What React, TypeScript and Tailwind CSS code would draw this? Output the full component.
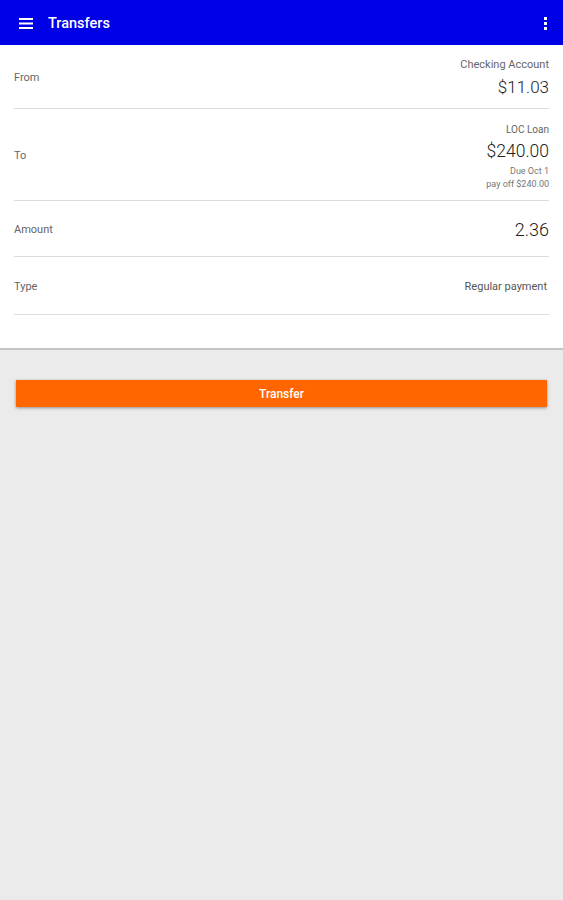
import { ReactNode } from "react";

function Row({
  label,
  children,
  className,
}: {
  label: string;
  children: ReactNode;
  className: string;
}) {
  return (
    <div
      className={`flex items-center justify-between border-b border-[#dcdcdc] ${className}`}
    >
      <span className="text-[11px] text-[#666] mt-[4px]">{label}</span>
      <div className="flex flex-col items-end text-right">{children}</div>
    </div>
  );
}

export default function App() {
  return (
    <div
      className="flex flex-col w-[563px] h-[900px] bg-[#ebebeb]"
      style={{ fontFamily: "Roboto, 'Liberation Sans', sans-serif" }}
    >
      {/* App bar */}
      <div className="flex items-center h-[45px] bg-[#0000e6] px-[19px] text-white">
        <svg width="14" height="11" viewBox="0 0 14 11" className="shrink-0 mt-[2px]">
          <rect x="0" y="0" width="14" height="2" fill="white" />
          <rect x="0" y="4.5" width="14" height="2" fill="white" />
          <rect x="0" y="9" width="14" height="2" fill="white" />
        </svg>
        <span className="ml-[15px] mt-[2px] text-[14.5px] font-medium">Transfers</span>
        <div className="ml-auto mr-[-3px] mt-[2px] flex flex-col gap-[2px]">
          <span className="w-[3px] h-[3px] bg-white" />
          <span className="w-[3px] h-[3px] bg-white" />
          <span className="w-[3px] h-[3px] bg-white" />
        </div>
      </div>

      {/* Form panel */}
      <div className="bg-white px-[14px] pb-[33px] border-b-2 border-[#c4c4c4]">
        <Row label="From" className="h-[64px]">
          <span className="text-[11px] text-[#666] leading-[14px] mt-[2px]">
            Checking Account
          </span>
          <span className="text-[17px] font-light text-[#222] leading-[22px] mt-[4px]">
            $11.03
          </span>
        </Row>
        <Row label="To" className="h-[92px]">
          <span className="text-[10px] text-[#666] leading-[13px] mt-[4px]">LOC Loan</span>
          <span className="text-[17.5px] font-light text-[#222] leading-[22px] mt-[4px]">
            $240.00
          </span>
          <span className="text-[9px] text-[#777] leading-[12px] mt-[3px]">
            Due Oct 1
          </span>
          <span className="text-[9px] text-[#777] leading-[12px] mt-[1px]">
            pay off $240.00
          </span>
        </Row>
        <Row label="Amount" className="h-[56px]">
          <span className="text-[18px] font-light text-[#222] mt-[1px]">2.36</span>
        </Row>
        <Row label="Type" className="h-[58px]">
          <span className="text-[11px] text-[#555] mr-[2px] mt-[4px]">Regular payment</span>
        </Row>
      </div>

      {/* Action */}
      <div className="px-[16px] pt-[30px]">
        <button className="w-full h-[27px] bg-[#ff6600] text-white text-[12px] font-medium shadow-[0_1px_3px_rgba(0,0,0,0.4)]">
          Transfer
        </button>
      </div>
    </div>
  );
}
